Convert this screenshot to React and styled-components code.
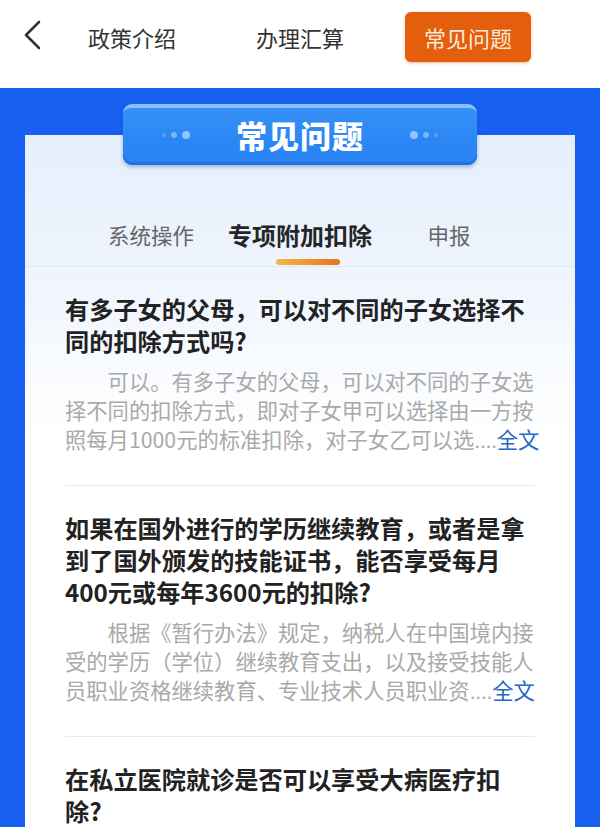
import React from 'react'
import styled, { createGlobalStyle } from "styled-components";

const GlobalStyle = createGlobalStyle`
  html, body {
    margin: 0;
    padding: 0;
    background: #1760f2;
  }
  body {
    font-family: "Noto Sans CJK SC", "Noto Sans", sans-serif;
    overflow: hidden;
  }
`;

const Page = styled.div`
  width: 600px;
  height: 827px;
  overflow: hidden;
  background: #1760f2;
`;

const TopNav = styled.div`
  height: 88px;
  box-sizing: border-box;
  background: #fff;
  display: flex;
  align-items: flex-start;
  padding: 12px 0 0 48px;
  position: relative;
`;

const BackButton = styled.div`
  position: absolute;
  left: 18px;
  top: 17px;
  width: 28px;
  height: 36px;
`;

const NavItem = styled.div`
  width: 168px;
  height: 50px;
  display: flex;
  justify-content: center;
  align-items: center;
`;

const NavLabel = styled.span`
  font-size: 22px;
  line-height: 30px;
  color: ${(p) => (p.active ? "#fbe9d8" : "#333")};
  background: ${(p) => (p.active ? "#e35f0d" : "transparent")};
  border-radius: 6px;
  width: 126px;
  height: 50px;
  display: flex;
  align-items: center;
  justify-content: center;
  box-shadow: ${(p) => (p.active ? "0 1px 3px rgba(227,95,13,0.45)" : "none")};
`;

const BlueArea = styled.div`
  padding: 47px 25px 0;
`;

const Card = styled.div`
  position: relative;
  background: linear-gradient(180deg, #e5effc 0px, #eef4fd 130px, #ffffff 300px);
  padding-top: 85px;
  min-height: 700px;
`;

const Banner = styled.div`
  position: absolute;
  top: -31px;
  left: 98px;
  width: 354px;
  height: 61px;
  box-sizing: border-box;
  border-radius: 9px;
  background: linear-gradient(180deg, #3590f7 0%, #2b86f5 60%, #2a82f2 100%);
  border-top: 4px solid #8cc0fa;
  box-shadow: inset 0 -3px 0 #2371e2, 0 2px 4px rgba(10, 60, 160, 0.35);
  display: flex;
  align-items: center;
  justify-content: center;
  gap: 46px;
`;

const BannerTitle = styled.div`
  color: #fff;
  font-size: 31px;
  font-weight: 900;
  letter-spacing: 1px;
  line-height: 40px;
  margin-top: -4px;
`;

const Dots = styled.div`
  display: flex;
  align-items: center;
  gap: 5px;
  flex-direction: ${(p) => (p.reverse ? "row-reverse" : "row")};
  margin-top: -4px;
`;

const Dot = styled.span`
  width: ${(p) => p.size}px;
  height: ${(p) => p.size}px;
  border-radius: 50%;
  background: rgba(170, 210, 255, ${(p) => p.alpha});
`;

const Tabs = styled.div`
  display: flex;
  justify-content: center;
  border-bottom: 1px solid #e3e7ee;
  padding-bottom: 1px;
`;

const Tab = styled.div`
  width: 149px;
  display: flex;
  flex-direction: column;
  align-items: center;
`;

const TabLabel = styled.div`
  font-size: ${(p) => (p.active ? "24px" : "21.5px")};
  font-weight: ${(p) => (p.active ? 700 : 400)};
  color: ${(p) => (p.active ? "#262626" : "#666")};
  line-height: 30px;
  white-space: nowrap;
`;

const Underline = styled.div`
  margin-top: 9px;
  width: 64px;
  height: 6px;
  border-radius: 3px;
  margin-left: 16px;
  background: ${(p) => (p.active ? "linear-gradient(90deg, #f2b84b, #e8731c)" : "transparent")};
`;

const List = styled.div`
  padding: 0 40px;
`;

const Item = styled.div`
  padding: 26px 0 29px;
  border-bottom: 1px solid #eaeaea;
`;

const Question = styled.div`
  font-size: 24.2px;
  font-weight: 700;
  line-height: 32px;
  color: #222;
`;

const Answer = styled.div`
  margin-top: 9px;
  margin-right: -8px;
  font-size: 21.3px;
  line-height: 29px;
  color: #a9a9a9;
  text-indent: 2em;
`;

const Dotdot = styled.span`
  font-family: "Liberation Sans", sans-serif;
  letter-spacing: -0.3px;
`;

const More = styled.span`
  color: #2469c6;
  white-space: nowrap;
`;

const faqs = [
  {
    q: "有多子女的父母，可以对不同的子女选择不同的扣除方式吗?",
    a: "可以。有多子女的父母，可以对不同的子女选择不同的扣除方式，即对子女甲可以选择由一方按照每月1000元的标准扣除，对子女乙可以选",
  },
  {
    q: "如果在国外进行的学历继续教育，或者是拿到了国外颁发的技能证书，能否享受每月400元或每年3600元的扣除?",
    a: "根据《暂行办法》规定，纳税人在中国境内接受的学历（学位）继续教育支出，以及接受技能人员职业资格继续教育、专业技术人员职业资",
  },
  {
    q: "在私立医院就诊是否可以享受大病医疗扣除?",
  },
];

const navItems = ["政策介绍", "办理汇算", "常见问题"];
const tabs = ["系统操作", "专项附加扣除", "申报"];

export const App = () => {
  return (
    <Page>
      <GlobalStyle />
      <TopNav>
        <BackButton>
          <svg width="28" height="36" viewBox="0 0 28 36">
            <path d="M21 5 L8 18 L21 31" fill="none" stroke="#333" strokeWidth="2.6" strokeLinecap="round" strokeLinejoin="round" />
          </svg>
        </BackButton>
        {navItems.map((n, i) => (
          <NavItem key={n}>
            <NavLabel active={i === 2}>{n}</NavLabel>
          </NavItem>
        ))}
      </TopNav>
      <BlueArea>
        <Card>
          <Banner>
            <Dots>
              <Dot size={4} alpha={0.35} />
              <Dot size={6} alpha={0.6} />
              <Dot size={8} alpha={0.8} />
            </Dots>
            <BannerTitle>常见问题</BannerTitle>
            <Dots reverse>
              <Dot size={4} alpha={0.35} />
              <Dot size={6} alpha={0.6} />
              <Dot size={8} alpha={0.8} />
            </Dots>
          </Banner>
          <Tabs>
            {tabs.map((t, i) => (
              <Tab key={t}>
                <TabLabel active={i === 1}>{t}</TabLabel>
                <Underline active={i === 1} />
              </Tab>
            ))}
          </Tabs>
          <List>
            {faqs.map((f) => (
              <Item key={f.q}>
                <Question>{f.q}</Question>
                {f.a && (
                  <Answer>
                    {f.a}
                    <Dotdot>....</Dotdot>
                    <More>全文</More>
                  </Answer>
                )}
              </Item>
            ))}
          </List>
        </Card>
      </BlueArea>
    </Page>
  );
};

export default App;
